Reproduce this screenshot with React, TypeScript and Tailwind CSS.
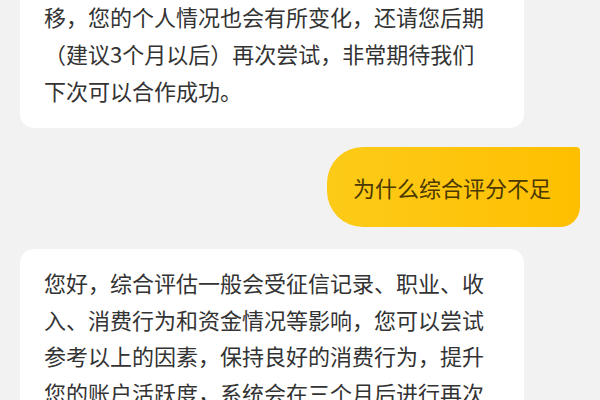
export default function App() {
  const font = { fontFamily: '"Noto Sans CJK SC", "Noto Sans", sans-serif' }

  return (
    <div className="w-[600px] h-[400px] overflow-hidden bg-[#f2f2f2]" style={font}>
      <div className="flex flex-col">
        {/* reply from the agent, top part scrolled out of view */}
        <div className="-mt-[56px] ml-[20px] w-[504px] bg-white rounded-[14px] pl-[24px] pr-[34px] pt-[17px] pb-[19px] text-[22px] leading-[37px] text-[#333333]">
          您好，您的综合评分暂时不足，随着时间的推移，您的个人情况也会有所变化，还请您后期（建议3个月以后）再次尝试，非常期待我们下次可以合作成功。
        </div>

        {/* user's question */}
        <div className="mt-[19px] self-end mr-[20px] h-[80px] flex items-center pl-[26px] pr-[29px] rounded-l-[36px] rounded-tr-[4px] rounded-br-[20px] bg-gradient-to-r from-[#fccb17] to-[#ffbf00] text-[22px] text-[#4a3800]">
          为什么综合评分不足
        </div>

        {/* agent answer */}
        <div className="mt-[22px] ml-[20px] w-[504px] bg-white rounded-[14px] pl-[24px] pr-[34px] pt-[15px] pb-[18px] text-[22px] leading-[36.5px] text-[#333333]">
          您好，综合评估一般会受征信记录、职业、收入、消费行为和资金情况等影响，您可以尝试参考以上的因素，保持良好的消费行为，提升您的账户活跃度，系统会在三个月后进行再次评估，感谢您的理解与支持。
        </div>
      </div>
    </div>
  )
}
